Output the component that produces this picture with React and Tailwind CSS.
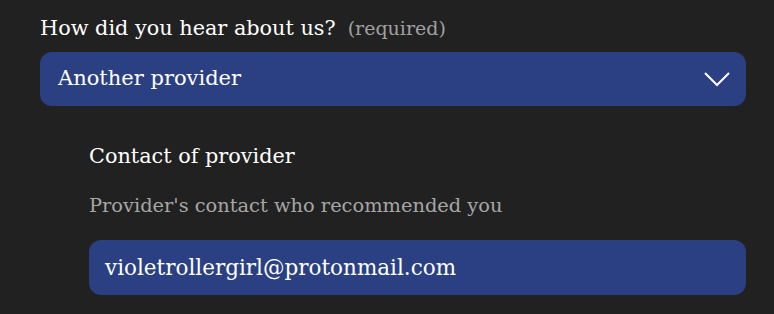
export default function App() {
  return (
    <div
      className="h-[314px] w-[774px] overflow-hidden bg-[#212121] pl-10 pr-7 pt-3 text-white"
      style={{ fontFamily: '"DejaVu Serif", serif' }}
    >
      <div className="flex items-baseline gap-3">
        <span className="text-[20.8px] leading-8">How did you hear about us?</span>
        <span className="text-[19px] text-[#a0a0a0]">(required)</span>
      </div>
      <button
        type="button"
        className="mt-2 flex h-[54px] w-full items-center justify-between rounded-xl bg-[#2b4083] pl-[18px] pr-[15px] text-[21px]"
      >
        <span>Another provider</span>
        <svg width="28" height="18" viewBox="0 0 28 18" fill="none" stroke="white" strokeWidth="2">
          <path d="M2 3 L14 15 L26 3" />
        </svg>
      </button>
      <div className="pl-[49px] pt-[34px]">
        <div className="text-[20.8px] leading-8">Contact of provider</div>
        <div className="mt-[20px] text-[19.4px] leading-7 text-[#a6a6a6]">
          Provider's contact who recommended you
        </div>
        <div className="mt-[20px] flex h-[55px] items-center rounded-xl bg-[#2b4083] pb-[1px] pl-4 pt-[3px] text-[21.5px]">
          violetrollergirl@protonmail.com
        </div>
      </div>
    </div>
  )
}
